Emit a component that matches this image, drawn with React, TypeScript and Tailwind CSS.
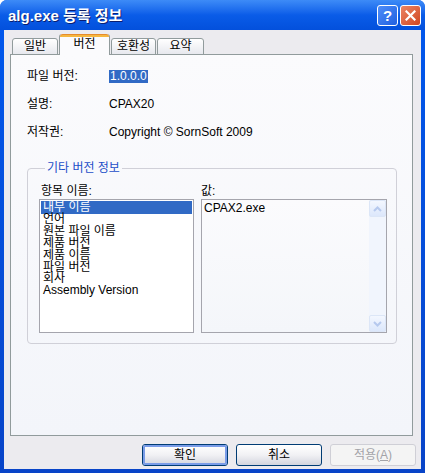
import React from "react";

const FONT = { fontFamily: '"Liberation Sans", "Noto Sans CJK KR", sans-serif' };

function Tab({ label, selected, w }: { label: string; selected?: boolean; w: string }) {
  if (selected) {
    return (
      <div
        className={`relative z-10 h-[21px] ${w} flex flex-col rounded-t-[3px] border-x border-[#919B9C] bg-[#FBFBFD]`}
      >
        <div className="h-[3px] rounded-t-[3px] bg-[#F5B740] border-t border-[#E68B2C]" />
        <div className="flex-1 flex items-start justify-center text-[12px] leading-[14px] text-black">
          {label}
        </div>
      </div>
    );
  }
  return (
    <div
      className={`h-[17px] ${w} flex items-start justify-center rounded-t-[3px] border border-[#919B9C] bg-gradient-to-b from-white to-[#E7E8EE] text-[12px] leading-[15px] text-black`}
    >
      {label}
    </div>
  );
}

function Button({ label, primary, disabled }: { label: string; primary?: boolean; disabled?: boolean }) {
  if (disabled) {
    return (
      <div className="w-[86px] h-[22px] flex items-center justify-center rounded-[3px] border border-[#CFCFD6] bg-[#F4F4F4] text-[12px] text-[#A3A3A8]">
        적용(<span className="underline">A</span>)
      </div>
    );
  }
  return (
    <div className="w-[86px] h-[22px] rounded-[3px] border border-[#003C74] bg-gradient-to-b from-white via-[#F1F1F4] to-[#D3D5DE] flex">
      <div
        className={`flex-1 flex items-center justify-center rounded-[2px] text-[12px] text-black ${
          primary ? "border-2 border-[#7A9CE8]" : "border border-transparent"
        }`}
      >
        {label}
      </div>
    </div>
  );
}

function ScrollBtn({ up }: { up?: boolean }) {
  return (
    <div className="h-[17px] w-[17px] rounded-[2px] border border-[#DCE6F7] bg-gradient-to-b from-[#F3F7FF] to-[#DCE7FB] flex items-center justify-center">
      <svg width="9" height="6" viewBox="0 0 9 6">
        {up ? (
          <path d="M1 5 L4.5 1.5 L8 5" fill="none" stroke="#B6C9EE" strokeWidth="2" />
        ) : (
          <path d="M1 1 L4.5 4.5 L8 1" fill="none" stroke="#B6C9EE" strokeWidth="2" />
        )}
      </svg>
    </div>
  );
}

export default function App() {
  const items = [
    "내부 이름",
    "언어",
    "원본 파일 이름",
    "제품 버전",
    "제품 이름",
    "파일 버전",
    "회사",
    "Assembly Version",
  ];
  return (
    <div className="w-[425px] h-[473px] bg-white" style={FONT}>
      <div className="w-[425px] h-[473px] flex flex-col rounded-t-[7px] bg-gradient-to-b from-[#0058EE] to-[#0844C8] px-[4px] pb-[4px]">
        {/* Title bar */}
        <div className="h-[30px] -mx-[4px] rounded-t-[7px] bg-gradient-to-b from-[#3D8BF7] via-[#0A5CE8] to-[#0350DC] flex items-center pl-[8px] pr-[4px]">
          <div
            className="flex-1 text-white font-bold text-[15px] leading-none"
            style={{ textShadow: "1px 1px 0 #0A1E70" }}
          >
            alg.exe 등록 정보
          </div>
          <div className="flex gap-[2px] items-center">
            <div className="w-[21px] h-[21px] rounded-[3px] border border-white bg-gradient-to-br from-[#4F8EF9] to-[#1F5FE0] flex items-center justify-center text-white font-bold text-[15px] leading-none">
              ?
            </div>
            <div className="w-[21px] h-[21px] rounded-[3px] border border-white bg-gradient-to-br from-[#EB8463] to-[#D0451C] flex items-center justify-center">
              <svg width="11" height="11" viewBox="0 0 11 11">
                <path d="M1.5 1.5 L9.5 9.5 M9.5 1.5 L1.5 9.5" stroke="white" strokeWidth="2.2" strokeLinecap="square" />
              </svg>
            </div>
          </div>
        </div>

        {/* Body */}
        <div className="flex-1 flex flex-col bg-[#ECEBEF] pt-[4px] pb-[3px]">
          {/* tabs */}
          <div className="h-[21px] flex items-end ml-[8px]">
            <Tab label="일반" w="w-[46px]" />
            <div className="w-[1px]" />
            <Tab label="버전" w="w-[51px]" selected />
            <div className="w-[1px]" />
            <Tab label="호환성" w="w-[45px]" />
            <div className="w-[1px]" />
            <Tab label="요약" w="w-[47px]" />
          </div>

          {/* panel */}
          <div className="-mt-px ml-[6px] mr-[8px] h-[382px] border border-[#919B9C] bg-gradient-to-b from-[#FBFBFD] to-[#F3F5FA] pl-[16px] pr-[15px] pt-[13px] flex flex-col text-[12px] text-black">
            <div className="h-[16px] flex items-center">
              <div className="w-[82px]">파일 버전:</div>
              <div className="bg-[#316AC5] text-white px-[1px] leading-[13px]">1.0.0.0</div>
            </div>
            <div className="h-[16px] flex items-center mt-[12px]">
              <div className="w-[82px]">설명:</div>
              <div>CPAX20</div>
            </div>
            <div className="h-[16px] flex items-center mt-[12px]">
              <div className="w-[82px]">저작권:</div>
              <div>Copyright © SornSoft 2009</div>
            </div>

            <fieldset className="mt-[21px] h-[183px] w-[370px] rounded-[4px] border border-[#D0D0D8] pl-[11px] pr-[9px] pb-[10px] flex flex-col">
              <legend className="ml-[6px] px-[2px] text-[#1C4FC8] text-[12px] leading-[14px]">기타 버전 정보</legend>
              <div className="flex gap-[7px] mt-[6px]">
                <div className="w-[155px] flex flex-col">
                  <div className="h-[14px] leading-[14px] ml-[2px] mt-[3px]">항목 이름:</div>
                  <div className="mt-[1px] h-[134px] border border-[#A5A5AD] bg-white pt-[1px] px-[1px]">
                    {items.map((it, i) => (
                      <div
                        key={it}
                        className={`pl-[2px] whitespace-nowrap ${
                          i === 0 ? "bg-[#316AC5] text-white h-[13px] leading-[13px]" : "h-[11.9px] leading-[11.9px]"
                        }`}
                      >
                        {it}
                      </div>
                    ))}
                  </div>
                </div>
                <div className="w-[186px] flex flex-col">
                  <div className="h-[14px] leading-[14px] mt-[3px]">값:</div>
                  <div className="mt-[1px] h-[134px] border border-[#A5A5AD] bg-gradient-to-b from-[#FBFBFD] to-[#F4F6FA] flex">
                    <div className="flex-1 pl-[2px] pt-[1px] leading-[14px]">CPAX2.exe</div>
                    <div className="w-[17px] flex flex-col bg-[#F1F5FD]">
                      <ScrollBtn up />
                      <div className="flex-1" />
                      <ScrollBtn />
                    </div>
                  </div>
                </div>
              </div>
            </fieldset>
          </div>

          {/* buttons */}
          <div className="mt-[8px] flex justify-end gap-[8px] pr-[5px]">
            <Button label="확인" primary />
            <Button label="취소" />
            <Button label="적용(A)" disabled />
          </div>
        </div>
      </div>
    </div>
  );
}
